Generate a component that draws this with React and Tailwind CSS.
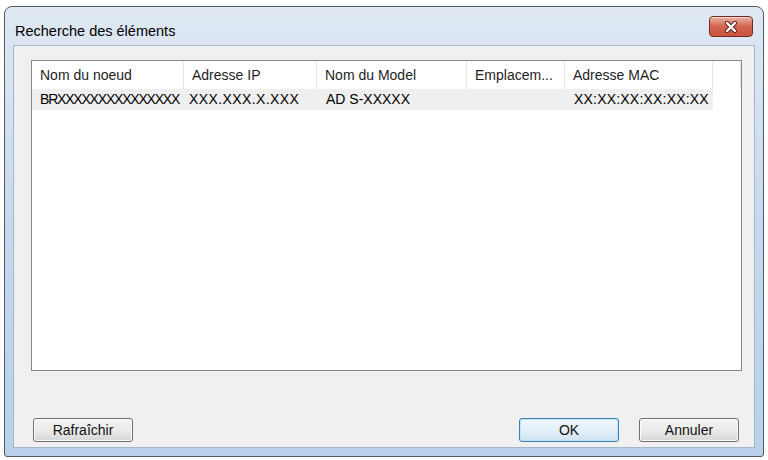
import React from 'react';

const columns = [
  { label: 'Nom du noeud', width: 'w-[152px]' },
  { label: 'Adresse IP', width: 'w-[133px]' },
  { label: 'Nom du Model', width: 'w-[150px]' },
  { label: 'Emplacem...', width: 'w-[98px]' },
  { label: 'Adresse MAC', width: 'w-[148px]' },
];

function CloseButton() {
  return (
    <button
      type="button"
      className="mt-[9px] flex h-[21px] w-[44px] items-center justify-center rounded-[4px] border border-[#6e2a20] bg-linear-to-b from-[#eab2a4] via-[#d2634e] to-[#c9553c] shadow-[inset_0_1px_0_rgba(255,255,255,0.5)]"
    >
      <svg width="16" height="12" viewBox="0 0 16 12">
        <path d="M4 2 L12 10 M12 2 L4 10" stroke="#5a2019" strokeWidth="4.2" strokeLinecap="round" />
        <path d="M4 2 L12 10 M12 2 L4 10" stroke="#ffffff" strokeWidth="2.4" strokeLinecap="round" />
      </svg>
    </button>
  );
}

function WinButton({ children, primary }) {
  return (
    <button
      type="button"
      className={
        primary
          ? 'h-[24px] w-[100px] rounded-[3px] border border-[#3c7fb1] bg-linear-to-b from-[#eef7fc] via-[#e3f0f8] to-[#cfe3ef] text-[14px] text-[#111] shadow-[inset_0_0_0_1px_#bfe4f8]'
          : 'h-[24px] w-[100px] rounded-[3px] border border-[#707070] bg-linear-to-b from-[#f3f3f3] via-[#ebebeb] to-[#d6d6d6] text-[14px] text-[#111] shadow-[inset_0_0_0_1px_#fbfbfb]'
      }
    >
      {children}
    </button>
  );
}

export default function App() {
  return (
    <div className="h-[460px] w-[768px] bg-white pl-[4px] pt-[6px] font-['Liberation_Sans',Arial,sans-serif]">
      <div className="flex h-[451px] w-[760px] flex-col overflow-hidden rounded-t-[8px] rounded-b-[3px] border border-[#4f5964] bg-linear-to-b from-[#dfe8f3] via-[#c6d9ed] to-[#b8d0ea]">
        {/* title bar */}
        <div className="flex h-[38px] items-start justify-between pl-[10px] pr-[10px]">
          <span className="mt-[15px] text-[14.5px] leading-[18px] text-black">Recherche des éléments</span>
          <CloseButton />
        </div>

        {/* client area */}
        <div className="ml-[8px] flex h-[403px] w-[742px] flex-col border border-[#a3b6ca] bg-[#f0f0f0] pl-[17px] pt-[14px]">
          <div className="flex h-[311px] w-[711px] flex-col border border-[#828790] bg-white">
            <div className="flex h-[28px] text-[14px] text-[#1e1e1e]">
              {columns.map((c) => (
                <div key={c.label} className={`${c.width} flex items-center border-r border-[#e3e6ea] pl-[8px]`}>
                  {c.label}
                </div>
              ))}
              <div className="flex-1 border-r border-[#e3e6ea]" />
            </div>
            <div className="flex h-[21px] w-[681px] items-center bg-[#efefef] text-[14px] text-black">
              <div className="w-[152px] whitespace-nowrap pl-[8px] tracking-[-1.2px]">BRXXXXXXXXXXXXXXX</div>
              <div className="w-[133px] whitespace-nowrap pl-[5px] tracking-[0.4px]">XXX.XXX.X.XXX</div>
              <div className="w-[150px] whitespace-nowrap pl-[9px]">AD S-XXXXX</div>
              <div className="w-[98px]" />
              <div className="w-[148px] whitespace-nowrap pl-[9px] tracking-[0.2px]">XX:XX:XX:XX:XX:XX</div>
            </div>
          </div>

          <div className="mt-[47px] flex w-[711px] items-center justify-between pl-[2px] pr-[3px]">
            <WinButton>Rafraîchir</WinButton>
            <div className="flex gap-[20px]">
              <WinButton primary>OK</WinButton>
              <WinButton>Annuler</WinButton>
            </div>
          </div>
        </div>
      </div>
    </div>
  );
}
